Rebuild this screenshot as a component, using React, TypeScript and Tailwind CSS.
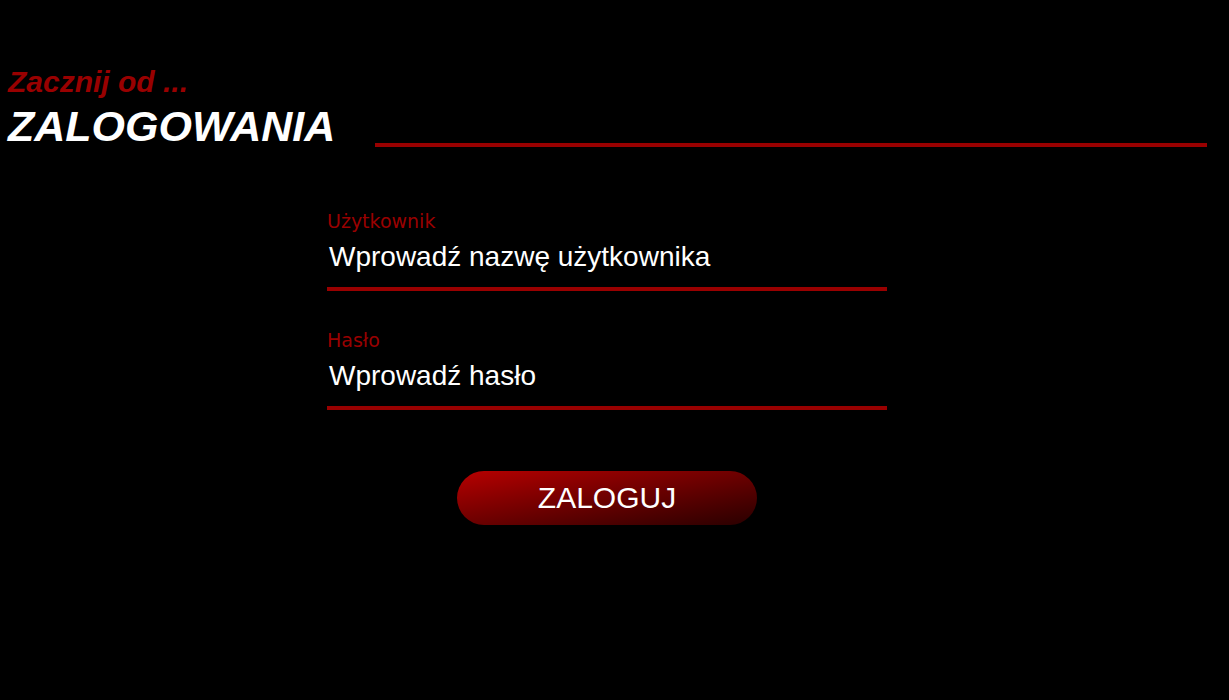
import React from "react";

export default function App() {
  const arial = { fontFamily: '"Liberation Sans", Arial, sans-serif' };
  const comic = { fontFamily: '"Comic Sans MS", "DejaVu Sans", sans-serif' };
  return (
    <div className="w-[1229px] h-[700px] bg-black overflow-hidden" style={arial}>
      <div className="pt-[65px] pl-[8px] pr-[22px]">
        <div className="text-[30px] leading-[34px] font-bold italic text-[#990000]">Zacznij od ...</div>
        <div className="flex items-end mt-[2px]">
          <div className="text-[43px] leading-[50px] font-bold italic text-white shrink-0">ZALOGOWANIA</div>
          <div className="flex-1 ml-[40px] mb-[4px] h-[4px] bg-[#990000]" />
        </div>
      </div>
      <div className="ml-[327px] w-[560px] mt-[59px]">
        <div className="flex flex-col">
          <label className="text-[19px] leading-[22px] text-[#990000]" style={comic}>Użytkownik</label>
          <div className="mt-[7px] text-[28px] leading-[36px] text-white pl-[2px]">Wprowadź nazwę użytkownika</div>
          <div className="mt-[12px] h-[4px] bg-[#990000]" />
        </div>
        <div className="flex flex-col mt-[38px]">
          <label className="text-[19px] leading-[22px] text-[#990000]" style={comic}>Hasło</label>
          <div className="mt-[7px] text-[28px] leading-[36px] text-white pl-[2px]">Wprowadź hasło</div>
          <div className="mt-[12px] h-[4px] bg-[#990000]" />
        </div>
        <div className="flex justify-center mt-[61px]">
          <button className="w-[300px] h-[54px] rounded-full bg-linear-to-br from-[#b80000] to-[#2a0000] text-white text-[30px] leading-[54px]">ZALOGUJ</button>
        </div>
      </div>
    </div>
  );
}
